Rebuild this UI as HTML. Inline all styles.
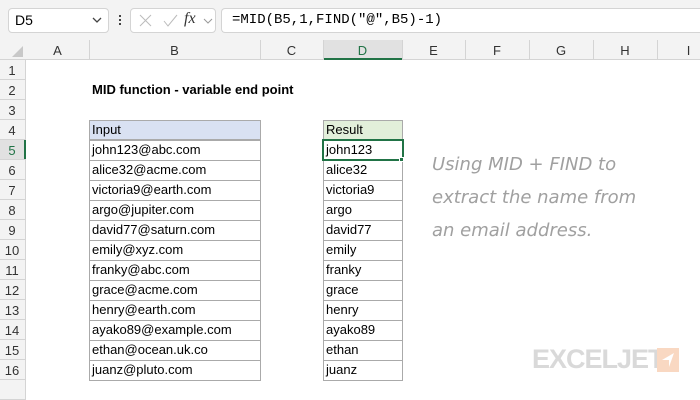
<!DOCTYPE html><html><head><style>
body{margin:0;width:700px;height:400px;overflow:hidden;background:#fff;font-family:"Liberation Sans",Calibri,sans-serif;position:relative}
.a{position:absolute;box-sizing:border-box}
.t{font-size:13px;color:#000;white-space:nowrap}
</style></head><body>
<div class="a" style="left:0;top:0;width:700px;height:40px;background:#f3f3f3"></div>
<div class="a" style="left:8px;top:8px;width:101px;height:25px;background:#fff;border:1px solid #d4d4d4;border-radius:4px"></div>
<div class="a t" style="left:15px;top:12px;font-size:14px">D5</div>
<svg class="a" style="left:92px;top:16px" width="10" height="8"><path d="M1 2l4 4 4-4" stroke="#444" fill="none" stroke-width="1.3"/></svg>
<div class="a" style="left:119px;top:15px;width:2px;height:2px;background:#444;box-shadow:0 4px #444,0 8px #444"></div>
<div class="a" style="left:130px;top:8px;width:86px;height:25px;background:#fff;border:1px solid #d4d4d4;border-radius:4px"></div>
<svg class="a" style="left:138px;top:14px" width="80" height="14"><path d="M2 1l11 11M13 1L2 12" stroke="#bbb" fill="none"/><path d="M26 7l4 5 9-11" stroke="#bbb" fill="none"/></svg>
<div class="a" style="left:184px;top:10px;font-family:'Liberation Serif',serif;font-style:italic;font-size:16px;color:#333">fx</div>
<svg class="a" style="left:203px;top:17px" width="10" height="8"><path d="M1 2l4 4 4-4" stroke="#999" fill="none"/></svg>
<div class="a" style="left:221px;top:8px;width:479px;height:25px;background:#fff;border:1px solid #d4d4d4;border-radius:4px 0 0 4px;border-right:none"></div>
<div class="a" style="left:232px;top:12px;font-family:'Liberation Mono',monospace;font-size:14px">=MID(B5,1,FIND("@",B5)-1)</div>
<div class="a" style="left:0;top:40px;width:700px;height:20px;background:#f3f3f3;border-bottom:1px solid #d4d4d4"></div>
<div class="a" style="left:0;top:60px;width:26px;height:340px;background:#f3f3f3;border-right:1px solid #d4d4d4"></div>
<div class="a" style="left:323px;top:40px;width:79px;height:20px;background:#e1e1e1;border-bottom:2px solid #217346"></div>
<div class="a" style="left:0;top:140px;width:26px;height:20px;background:#e1e1e1;border-right:2px solid #217346"></div>
<svg class="a" style="left:12px;top:46px" width="12" height="12"><path d="M11 0V11H0z" fill="#c8c8c8"/></svg>
<div id="cols"></div>
<script>
var b=[26,89,260,323,402,465,529,593,657,720],L="ABCDEFGHI",h="";
for(var i=0;i<9;i++){h+='<div class="a t" style="left:'+b[i]+'px;top:43px;width:'+(b[i+1]-b[i])+'px;text-align:center;color:'+(i==3?'#217346':'#333')+'">'+L[i]+'</div>';if(i>0)h+='<div class="a" style="left:'+b[i]+'px;top:40px;width:1px;height:20px;background:#d4d4d4"></div>';}
for(var r=1;r<=17;r++){var y=40+20*r;h+='<div class="a t" style="left:0;top:'+(y+3)+'px;width:24px;text-align:center;color:'+(r==5?'#217346':'#333')+'">'+(r<17?r:'')+'</div><div class="a" style="left:0;top:'+(y+19)+'px;width:26px;height:1px;background:#d4d4d4"></div>';}
var E=["john123@abc.com","alice32@acme.com","victoria9@earth.com","argo@jupiter.com","david77@saturn.com","emily@xyz.com","franky@abc.com","grace@acme.com","henry@earth.com","ayako89@example.com","ethan@ocean.uk.co","juanz@pluto.com"];
h+='<div class="a" style="left:89px;top:120px;width:172px;height:20px;background:#d9e1f2;border:1px solid #aaa"></div><div class="a t" style="left:92px;top:122px">Input</div>';
h+='<div class="a" style="left:323px;top:120px;width:80px;height:20px;background:#e2efda;border:1px solid #aaa"></div><div class="a t" style="left:326px;top:122px">Result</div>';
for(var k=0;k<12;k++){var y=140+20*k;h+='<div class="a" style="left:89px;top:'+y+'px;width:172px;height:21px;border:1px solid #aaa"></div><div class="a t" style="left:92px;top:'+(y+2)+'px">'+E[k]+'</div>';
h+='<div class="a" style="left:323px;top:'+y+'px;width:80px;height:21px;border:1px solid #aaa"></div><div class="a t" style="left:326px;top:'+(y+2)+'px">'+E[k].split("@")[0]+'</div>';}
document.getElementById("cols").innerHTML=h;
</script>
<div class="a t" style="left:92px;top:82px;font-weight:bold">MID function - variable end point</div>
<div class="a" style="left:322px;top:139px;width:82px;height:22px;border:2px solid #217346"></div>
<div class="a" style="left:399px;top:157px;width:5px;height:5px;background:#217346;border:1px solid #fff"></div>
<div class="a" style="left:432px;top:148px;font-family:'DejaVu Sans',sans-serif;font-style:italic;font-size:18px;line-height:33px;color:#a0a0a0;white-space:nowrap">Using MID + FIND to<br>extract the name from<br>an email address.</div>
<div class="a" style="left:532px;top:344px;font-size:27px;font-weight:bold;color:#d9d9d9;letter-spacing:-1px">EXCELJET</div>
<div class="a" style="left:657px;top:348px;width:22px;height:24px;background:#f9d8c2"></div>
<svg class="a" style="left:660px;top:352px" width="16" height="16"><path d="M14 1L2 8l7 0 0 7z" fill="#fff"/></svg>
</body></html>
